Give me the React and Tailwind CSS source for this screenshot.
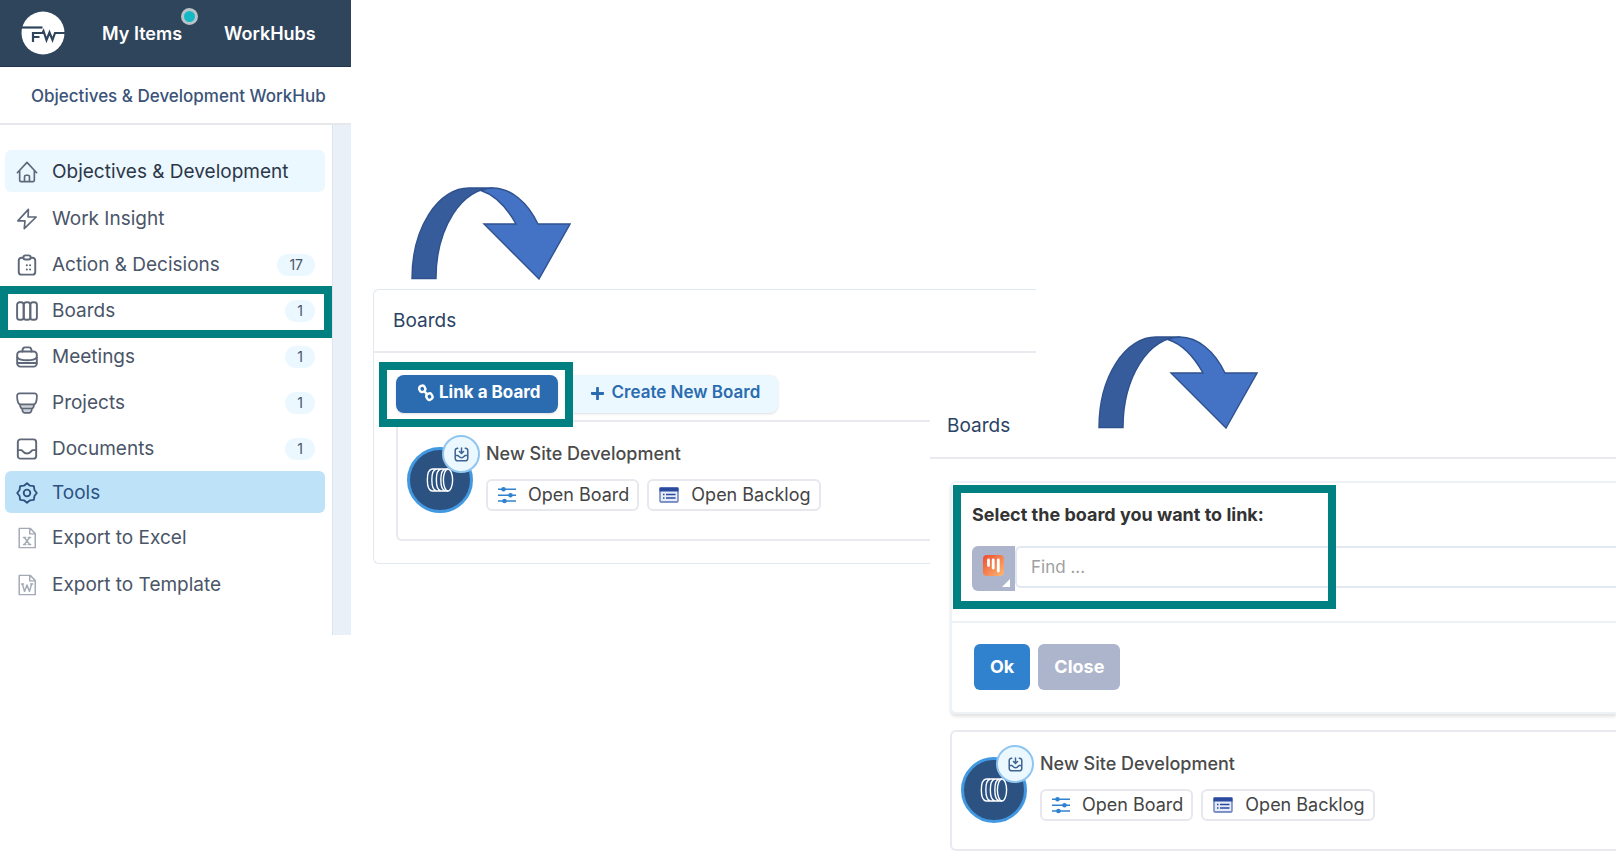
import { FaPlus } from 'react-icons/fa';

const navItems = [
  { label: 'Work Insight', icon: BoltIcon },
  { label: 'Action & Decisions', icon: ClipboardIcon, count: 17 },
  { label: 'Boards', icon: ColumnsIcon, count: 1, marked: true },
  { label: 'Meetings', icon: BriefcaseIcon, count: 1 },
  { label: 'Projects', icon: ProjectIcon, count: 1 },
  { label: 'Documents', icon: InboxIcon, count: 1 },
];

const exportItems = [
  { label: 'Export to Excel', letter: 'x' },
  { label: 'Export to Template', letter: 'w' },
];

function Icon({ children, className = 'text-[#5f6878]', width = 1.7 }) {
  return (
    <svg
      viewBox="0 0 24 24"
      fill="none"
      stroke="currentColor"
      strokeWidth={width}
      strokeLinecap="round"
      strokeLinejoin="round"
      aria-hidden="true"
      className={`size-[22px] shrink-0 ${className}`}
    >
      {children}
    </svg>
  );
}

function HomeIcon() {
  return (
    <Icon width={1.8}>
      <path d="M1.5 12.8 12 1.5l10.5 11.3M4 10.500v10.500a1.500 1.500 0 0 0 1.500 1.500h13a1.500 1.500 0 0 0 1.500-1.500V10.500M9.300 22v-4.700a1.800 1.800 0 0 1 1.800-1.800h1.800a1.800 1.800 0 0 1 1.800 1.800V22" />
    </Icon>
  );
}

function BoltIcon() {
  return (
    <Icon width={1.8}>
      <path d="M13.5 1.5 2 14h7.800L9 22.500 22 9.800h-8.800z" />
    </Icon>
  );
}

function ClipboardIcon() {
  return (
    <Icon width={2.1}>
      <path d="M8 4H6a3 3 0 0 0-3 3v12.500a3 3 0 0 0 3 3h12a3 3 0 0 0 3-3V7a3 3 0 0 0-3-3h-2" />
      <rect x="8" y="1.5" width="8" height="4.5" rx="2.2" />
      <path d="M11.8 12.3h.1M15.300 12.300h.1M11.800 17h.1M15.300 17h.1" strokeWidth="2.200" />
    </Icon>
  );
}

function ColumnsIcon() {
  return (
    <Icon width={2.1}>
      <rect x="1.2" y="2.5" width="7.2" height="19" rx="2.8" />
      <rect x="8.4" y="2.5" width="7.2" height="19" rx="2.8" />
      <rect x="15.6" y="2.5" width="7.2" height="19" rx="2.8" />
    </Icon>
  );
}

function BriefcaseIcon() {
  return (
    <Icon width={2.1}>
      <rect x="1.3" y="6" width="21.4" height="16.5" rx="3.5" />
      <path d="M7 6c0-3 1-4.500 3-4.500h4c2 0 3 1.500 3 4.500M1.500 12.500c2.500 4 18.500 4 21 0M1.800 18.500h20.400" />
    </Icon>
  );
}

function ProjectIcon() {
  return (
    <Icon width={1.9}>
      <path d="M4 13.5h16l-3.500 9H7.500z" fill="#cbd0d8" stroke="none" />
      <path d="M1.2 4a2.500 2.500 0 0 1 2.500-2.500h16.600A2.500 2.500 0 0 1 22.800 4c0 4.500-.8 9.500-3.600 9.500H4.800C2 13.500 1.200 8.500 1.200 4zM4.200 13.500c.3 2.500 1.200 4.300 2.500 4.500h10.600c1.300-.2 2.200-2 2.500-4.500M6.700 18c.2 3 1 4.700 2.500 4.700h5.600c1.500 0 2.300-1.700 2.500-4.700" />
    </Icon>
  );
}

function InboxIcon() {
  return (
    <Icon width={2.1}>
      <rect x="2" y="1.5" width="20" height="21" rx="3" />
      <path d="M2.3 13.2h3.400c1.500 0 2 3.800 6.300 3.800s4.800-3.800 6.300-3.800h3.400" />
    </Icon>
  );
}

function GearIcon() {
  return (
    <Icon width={2} className="text-[#2c5282]">
      <path d="M12 1.3 15.300 4l4.200.5.600 4.200L22.700 12l-2.600 3.300-.6 4.200-4.200.5L12 22.700 8.700 20l-4.200-.5-.6-4.200L1.300 12l2.600-3.300.6-4.200L8.700 4z" />
      <circle cx="12" cy="12" r="3.6" />
    </Icon>
  );
}

function FileIcon({ letter }) {
  return (
    <Icon width={1.6} className="text-[#a3a9b5]">
      <path d="M3.5 1.5h12l5.500 5.500v15.500H3.500zM15 1.800V7.500h5.700" />
      {letter === 'x' ? (
        <path d="M9.200 11.500l5.600 7.500M14.800 11.500 9.200 19M8.200 11.500h2.300M13.500 11.500h2.300M8.200 19h2.500M13.500 19h2.500" />
      ) : (
        <path d="M7 11 9.300 19l2.700-7 2.700 7L17 11M6 11h2.200M16 11h2.200" />
      )}
    </Icon>
  );
}

function Logo() {
  return (
    <svg viewBox="0 0 44 44" className="size-11 shrink-0" role="img" aria-label="Home">
      <circle cx="22" cy="22" r="21.5" fill="#fff" />
      <g fill="none" stroke="#2f455c" strokeWidth="2.2">
        <path d="M0 16.500h21.500" />
        <path d="M12 31v-9h9.500l1-2 3 9 3-7.500 3 7.500 2.500-7H44" />
        <path d="M12 26h6.500" strokeWidth="2" />
      </g>
    </svg>
  );
}

function ChainIcon() {
  return (
    <svg viewBox="0 0 18 18" fill="none" stroke="currentColor" strokeWidth="2.4" aria-hidden="true" className="size-[18px]">
      <rect x="2.4" y="1.8" width="5.8" height="6.2" rx="2.6" transform="rotate(-25 5 5)" />
      <rect x="9.6" y="9.4" width="5.8" height="6.2" rx="2.6" transform="rotate(-25 12.7 12.7)" />
      <path d="m6.800 7 4 3.800" />
    </svg>
  );
}

function SlidersIcon() {
  return (
    <svg viewBox="0 0 18 18" fill="#3182ce" aria-hidden="true" className="size-[18px] shrink-0">
      <path d="M0 2.500h18v1.400H0zM0 8.500h18v1.400H0zM0 14.300h18v1.400H0z" />
      <circle cx="5.5" cy="3.2" r="2.3" />
      <circle cx="12.5" cy="9.2" r="2.3" />
      <circle cx="6.5" cy="15" r="2.3" />
    </svg>
  );
}

function ListIcon() {
  return (
    <svg viewBox="0 0 20 18" aria-hidden="true" className="h-[18px] w-5 shrink-0">
      <rect x="1" y="2" width="18" height="14" rx="1" fill="#e6ebf8" stroke="#5a73b8" strokeWidth="1.3" />
      <path d="M.5 1.500h19v4H.5z" fill="#2a4aa0" />
      <path d="M4 8.500h1.500M7 8.500h9.500M4 12h1.500M7 12h9.500" stroke="#2a4aa0" strokeWidth="1.4" />
    </svg>
  );
}

function BoardAvatar() {
  return (
    <div className="relative mt-[25px] grid size-[66px] shrink-0 place-items-center rounded-full border-3 border-[#4299e1] bg-[#2c5282]">
      <svg viewBox="0 0 28 24" fill="none" stroke="#fff" strokeWidth="1.4" aria-hidden="true" className="h-6 w-7">
        <path d="M6 1h16M6 23h16M6 1C-.2 2-.2 22 6 23M10.500 1C4.300 2 4.300 22 10.500 23M15 1c-6.200 1-6.200 21 0 22M19.500 1c-6.200 1-6.200 21 0 22" />
        <ellipse cx="22" cy="12" rx="4.6" ry="11" />
      </svg>
      <span className="absolute -top-[15px] -right-[10px] grid size-[38px] place-items-center rounded-full border-2 border-[#90c5ef] bg-[#ebf8ff]">
        <svg viewBox="0 0 16 16" fill="none" stroke="#3f6492" strokeWidth="1.6" strokeLinecap="round" aria-hidden="true" className="size-[15px]">
          <path d="M4 1.300A2.500 2.500 0 0 0 1.300 4v8A2.500 2.500 0 0 0 4 14.700h8a2.500 2.500 0 0 0 2.700-2.700V4A2.500 2.500 0 0 0 12 1.300M8 1v5M5.800 4.800 8 7l2.200-2.200M1.500 9H4c1 0 1.500 2.500 4 2.500S11 9 12 9h2.500" />
        </svg>
      </span>
    </div>
  );
}

function BoardCard() {
  return (
    <article className="flex h-[121px] gap-[13px] rounded-l-md border-2 border-r-0 border-[#e8eaf0] bg-white pl-[9px]">
      <BoardAvatar />
      <div className="pt-[18px]">
        <h3 className="text-[18px] leading-7 font-medium text-[#4a4a4a]">New Site Development</h3>
        <div className="mt-[11px] flex gap-2">
          <button className="flex h-8 items-center gap-3 rounded-md border-2 border-[#e6e8ee] pr-2 pl-[10px] text-[18px] leading-6 whitespace-nowrap text-[#444]">
            <SlidersIcon />
            Open Board
          </button>
          <button className="flex h-8 items-center gap-3 rounded-md border-2 border-[#e6e8ee] pr-2 pl-[10px] text-[18px] leading-6 whitespace-nowrap text-[#444]">
            <ListIcon />
            Open Backlog
          </button>
        </div>
      </div>
    </article>
  );
}

function CurvedArrow({ className }) {
  return (
    <svg viewBox="-1 -1 160 93" stroke="#2f528f" strokeWidth="1.4" aria-hidden="true" className={`h-[93px] w-40 ${className}`}>
      <path d="M0 90.500A57 90.500 0 0 1 57 0H81A57 90.500 0 0 0 24 90.500z" fill="#365c9c" />
      <path d="M69 2.500Q76 0 81 0A57 90.500 0 0 1 126 36H158L127 91 72 36H104Q89 9 69 2.500z" fill="#4472c4" />
    </svg>
  );
}

function Frame({ className }) {
  return <span className={`pointer-events-none absolute border-8 border-[#008080] ${className}`} />;
}

function Sidebar() {
  return (
    <aside>
      <header className="flex h-[67px] items-center border-b border-[#1f3650] bg-[#2f455c] pl-[21px] text-[18px] font-semibold text-white">
        <Logo />
        <a href="#items" className="relative ml-[37px]">
          My Items
          <span className="absolute -top-3 -right-4 size-[17px] rounded-full border-3 border-[#b8c4c8] bg-[#17b8c6]" />
        </a>
        <a href="#workhubs" className="ml-[42px]">WorkHubs</a>
      </header>
      <div className="flex h-[58px] items-center border-b-2 border-[#e6e8ec] pt-[3px] pl-[31px] text-[17px] font-medium whitespace-nowrap text-[#3b5378]">
        Objectives &amp; Development WorkHub
      </div>
      <div className="flex h-[510px]">
        <nav className="flex-1 pt-[25px] pr-[7px] pl-[5px] text-[19px] text-[#4a5568]">
          <a href="#home" className="mb-[3px] flex h-[42px] items-center gap-[14px] rounded-md bg-[#ebf8ff] pt-[2px] pl-[11px] text-[#2d3748]">
            <HomeIcon />
            Objectives &amp; Development
          </a>
          {navItems.map(({ label, icon: ItemIcon, count, marked }) => (
            <a key={label} href={`#${label}`} className="relative flex h-[46px] items-center gap-[14px] pt-[2px] pr-[10px] pl-[11px]">
              <ItemIcon />
              {label}
              {count && (
                <span className="ml-auto rounded-full bg-[#ebf8ff] px-3 text-[14px] leading-[22px]">{count}</span>
              )}
              {marked && <Frame className="-top-px -right-[7px] -bottom-[5px] -left-[5px]" />}
            </a>
          ))}
          <a href="#tools" className="flex h-[42px] items-center gap-[14px] rounded-md bg-[#bee3f8] pt-[2px] pl-[11px] text-[#2c5282]">
            <GearIcon />
            Tools
          </a>
          {exportItems.map((item) => (
            <a key={item.label} href={`#${item.letter}`} className="flex h-[47px] items-center gap-[14px] pt-[3px] pl-[11px]">
              <FileIcon letter={item.letter} />
              {item.label}
            </a>
          ))}
        </nav>
        <div className="w-[19px] border-l border-[#dfe3ea] bg-[#e9f0f7]" />
      </div>
    </aside>
  );
}

function BoardsPanel() {
  return (
    <section className="pt-[187px] pl-[22px]">
      <CurvedArrow className="ml-[38px]" />
      <div className="mt-[9px] -mr-[106px] rounded-l-md border border-r-0 border-[#e2e8f0] pb-[22px]">
        <h2 className="flex h-[63px] items-center border-b-2 border-[#e8eaf0] pt-[2px] pl-[19px] text-[19px] text-[#2a4365]">Boards</h2>
        <div className="pt-[22px] pl-[22px]">
          <div className="flex gap-2">
            <button className="relative flex h-[38px] items-center gap-1 rounded-lg bg-[#2b6cb0] pr-[17px] pb-[2px] pl-[21px] text-[17px] font-bold whitespace-nowrap text-white shadow">
              <ChainIcon />
              Link a Board
              <Frame className="-top-[13px] -right-[15px] -bottom-[14px] -left-[17px]" />
            </button>
            <button className="flex h-[38px] items-center gap-[7px] rounded-lg bg-[#ebf8ff] pr-[18px] pb-[2px] pl-6 text-[17px] font-semibold whitespace-nowrap text-[#2b6cb0] shadow">
              <FaPlus className="size-[15px]" />
              Create New Board
            </button>
          </div>
          <div className="mt-[7px]">
            <BoardCard />
          </div>
        </div>
      </div>
    </section>
  );
}

function LinkPanel() {
  return (
    <section className="relative z-10 mt-[360px] self-start bg-white">
      <CurvedArrow className="absolute -top-6 left-[168px]" />
      <h2 className="flex h-[99px] items-end border-b-2 border-[#e8eaf0] pb-[17px] pl-[17px] text-[19px] leading-7 text-[#2a4365]">Boards</h2>
      <div className="pt-[22px] pl-5">
        <form className="rounded-l-md border-2 border-r-0 border-[#edf2f7] shadow-[0_3px_3px_rgba(0,0,0,0.1)]">
          <div className="relative h-[140px] border-b-2 border-[#edf2f7] pt-[18px] pl-5">
            <label htmlFor="board" className="block text-[18px] leading-7 font-bold text-[#333]">
              Select the board you want to link:
            </label>
            <div className="mt-[17px] flex items-start">
              <button type="button" aria-label="Board type" className="relative grid h-[45px] w-[43px] shrink-0 place-items-center rounded-l-md bg-[#adb5cc] pb-[6px]">
                <svg viewBox="0 0 21 21" aria-hidden="true" className="size-[21px]">
                  <defs>
                    <linearGradient id="tile" x1="0" y1="0" x2="1" y2="1">
                      <stop offset="0" stopColor="#ee4b2f" />
                      <stop offset="1" stopColor="#fdba74" />
                    </linearGradient>
                  </defs>
                  <rect width="21" height="21" rx="4" fill="url(#tile)" />
                  <path d="M5.500 5v5.500M10.200 5v8M15.300 5v11" stroke="#fff" strokeWidth="2.8" strokeLinecap="round" />
                </svg>
                <svg viewBox="0 0 8 8" aria-hidden="true" className="absolute right-[5px] bottom-1 size-2">
                  <path d="M8 0v8H0z" fill="#fff" />
                </svg>
              </button>
              <input
                id="board"
                type="text"
                placeholder="Find ..."
                className="h-[42px] min-w-0 flex-1 rounded-l-md border-2 border-r-0 border-[#e2e8f0] pl-[14px] text-[17px] placeholder:text-[#a0a0a0]"
              />
            </div>
            <Frame className="top-[2px] left-px h-[124px] w-[383px]" />
          </div>
          <div className="flex h-[89px] gap-2 pt-[21px] pl-[22px] text-[18px] font-bold text-white">
            <button type="button" className="h-[46px] rounded-md bg-[#3182ce] px-4 pb-[2px]">Ok</button>
            <button type="button" className="h-[46px] rounded-md bg-[#adb5cc] px-4 pb-[2px]">Close</button>
          </div>
        </form>
        <div className="mt-4">
          <BoardCard />
        </div>
      </div>
    </section>
  );
}

export default function App() {
  return (
    <main className="grid min-h-screen grid-cols-[351px_579fr_686fr] overflow-hidden bg-white font-['Inter',sans-serif]">
      <Sidebar />
      <BoardsPanel />
      <LinkPanel />
    </main>
  );
}
